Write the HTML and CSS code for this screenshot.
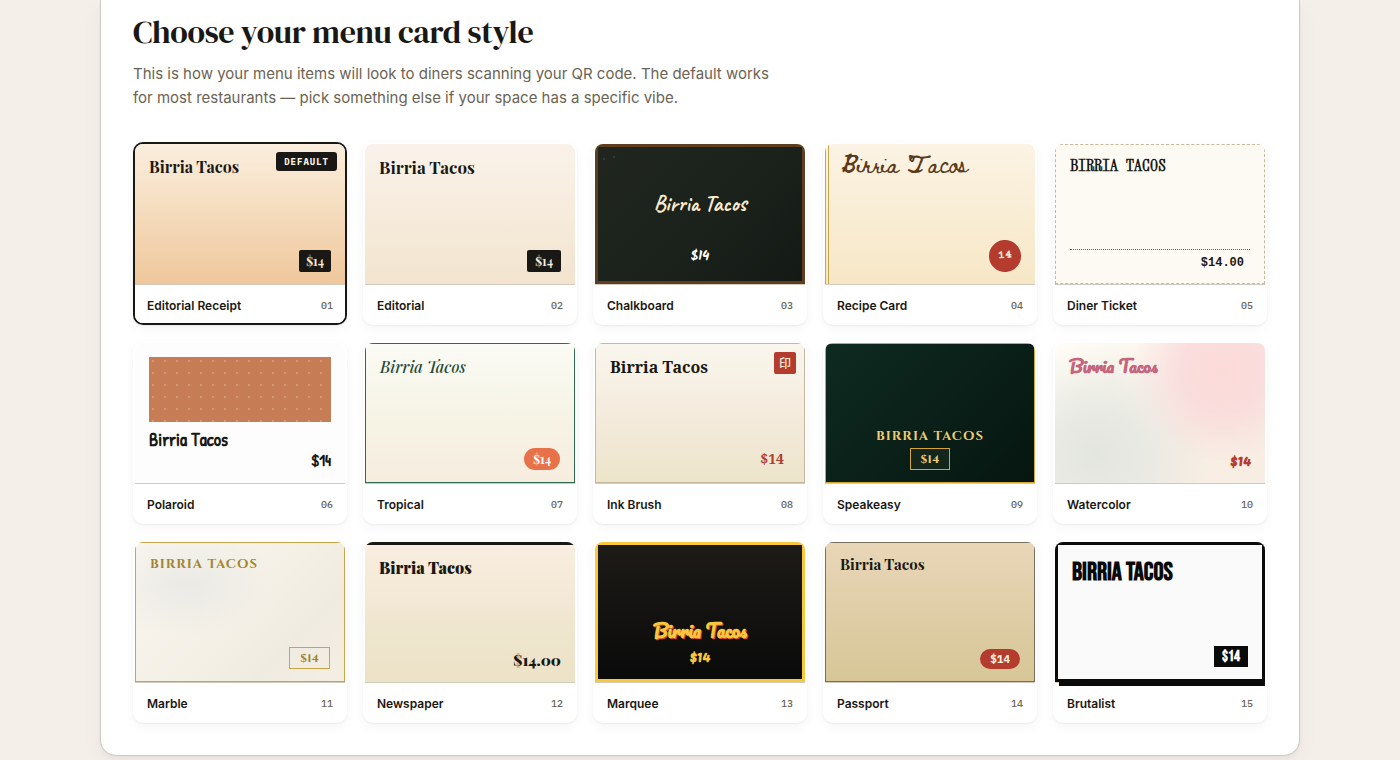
FILE: index.html
```html
<!DOCTYPE html>
<html lang="en">
<head>
<meta charset="utf-8">
<meta name="viewport" content="width=device-width, initial-scale=1">
<title>Choose your menu card style</title>
<link rel="stylesheet" href="styles.css">
</head>
<body>
<main class="panel">
  <h1 class="title">Choose your menu card style</h1>
  <p class="intro">This is how your menu items will look to diners scanning your QR code. The default works for most restaurants — pick something else if your space has a specific vibe.</p>
  <div class="grid">
    <button type="button" class="card selected" aria-pressed="true">
      <span class="preview receipt"><span class="dish">Birria Tacos</span><span class="price">$14</span><span class="badge">DEFAULT</span></span>
      <span class="foot"><span class="name">Editorial Receipt</span><span class="num">01</span></span>
    </button>
    <button type="button" class="card" aria-pressed="false">
      <span class="preview editorial"><span class="dish">Birria Tacos</span><span class="price">$14</span></span>
      <span class="foot"><span class="name">Editorial</span><span class="num">02</span></span>
    </button>
    <button type="button" class="card" aria-pressed="false">
      <span class="preview chalkboard"><span class="dish">Birria Tacos</span><span class="price">$14</span></span>
      <span class="foot"><span class="name">Chalkboard</span><span class="num">03</span></span>
    </button>
    <button type="button" class="card" aria-pressed="false">
      <span class="preview recipe"><span class="dish">Birria Tacos</span><span class="price">14</span></span>
      <span class="foot"><span class="name">Recipe Card</span><span class="num">04</span></span>
    </button>
    <button type="button" class="card" aria-pressed="false">
      <span class="preview diner"><span class="dish">BIRRIA TACOS</span><span class="price">$14.00</span></span>
      <span class="foot"><span class="name">Diner Ticket</span><span class="num">05</span></span>
    </button>
    <button type="button" class="card" aria-pressed="false">
      <span class="preview polaroid"><span class="photo"></span><span class="dish">Birria Tacos</span><span class="price">$14</span></span>
      <span class="foot"><span class="name">Polaroid</span><span class="num">06</span></span>
    </button>
    <button type="button" class="card" aria-pressed="false">
      <span class="preview tropical"><span class="dish">Birria Tacos</span><span class="price">$14</span></span>
      <span class="foot"><span class="name">Tropical</span><span class="num">07</span></span>
    </button>
    <button type="button" class="card" aria-pressed="false">
      <span class="preview ink"><span class="dish">Birria Tacos</span><span class="price">$14</span><span class="seal" lang="ja">印</span></span>
      <span class="foot"><span class="name">Ink Brush</span><span class="num">08</span></span>
    </button>
    <button type="button" class="card" aria-pressed="false">
      <span class="preview speakeasy"><span class="dish">BIRRIA TACOS</span><span class="price">$14</span></span>
      <span class="foot"><span class="name">Speakeasy</span><span class="num">09</span></span>
    </button>
    <button type="button" class="card" aria-pressed="false">
      <span class="preview watercolor"><span class="dish">Birria Tacos</span><span class="price">$14</span></span>
      <span class="foot"><span class="name">Watercolor</span><span class="num">10</span></span>
    </button>
    <button type="button" class="card" aria-pressed="false">
      <span class="preview marble"><span class="dish">BIRRIA TACOS</span><span class="price">$14</span></span>
      <span class="foot"><span class="name">Marble</span><span class="num">11</span></span>
    </button>
    <button type="button" class="card" aria-pressed="false">
      <span class="preview newspaper"><span class="dish">Birria Tacos</span><span class="price">$14.00</span></span>
      <span class="foot"><span class="name">Newspaper</span><span class="num">12</span></span>
    </button>
    <button type="button" class="card" aria-pressed="false">
      <span class="preview marquee"><span class="dish">Birria Tacos</span><span class="price">$14</span></span>
      <span class="foot"><span class="name">Marquee</span><span class="num">13</span></span>
    </button>
    <button type="button" class="card" aria-pressed="false">
      <span class="preview passport"><span class="dish">Birria Tacos</span><span class="price">$14</span></span>
      <span class="foot"><span class="name">Passport</span><span class="num">14</span></span>
    </button>
    <button type="button" class="card" aria-pressed="false">
      <span class="preview brutalist"><span class="dish">BIRRIA TACOS</span><span class="price">$14</span></span>
      <span class="foot"><span class="name">Brutalist</span><span class="num">15</span></span>
    </button>
  </div>
</main>
</body>
</html>
```
FILE: styles.css
```css
:root {
  --ink: #1a1814;
  --muted: #6b6353;
  --line: #d4cabb;
  --red: #b33c2e;
  --display: "Playfair Display", "Liberation Serif", serif;
  --mono: "IBM Plex Mono", "Liberation Mono", monospace;
}

* { box-sizing: border-box; }

body {
  margin: 0;
  min-height: 100vh;
  background: #f4efe8;
  color: var(--ink);
  font-family: Inter, "Liberation Sans", sans-serif;
}

.panel {
  max-width: 1200px;
  margin: 0 auto 4px;
  padding: 12px 32px 32px;
  background: #fff;
  border: 1px solid var(--line);
  border-top: 0;
  border-radius: 0 0 16px 16px;
  box-shadow: 0 2px 4px rgba(26, 24, 20, 0.04), 0 8px 24px rgba(26, 24, 20, 0.04);
}

.title {
  margin: 0;
  font-family: "DM Serif Display", "Liberation Serif", serif;
  font-size: 32px;
  line-height: 40px;
  font-weight: 400;
  letter-spacing: -0.01em;
}

.intro {
  max-width: 640px;
  margin: 10px 0 32px;
  font-size: 15px;
  line-height: 24px;
  color: var(--muted);
}

.grid {
  display: grid;
  grid-template-columns: repeat(5, minmax(0, 1fr));
  gap: 16px;
}

.card {
  display: flex;
  flex-direction: column;
  padding: 0;
  overflow: hidden;
  border: 2px solid transparent;
  border-radius: 10px;
  background: #fff;
  color: var(--ink);
  font: inherit;
  text-align: left;
  cursor: pointer;
  box-shadow: 0 1px 2px rgba(26, 24, 20, 0.06), 0 4px 12px rgba(26, 24, 20, 0.04);
}

.selected { border-color: var(--ink); }

.preview {
  position: relative;
  display: flex;
  flex-direction: column;
  justify-content: space-between;
  align-items: flex-start;
  height: 140px;
  padding: 12px 14px;
}

.dish {
  font-family: var(--display);
  font-size: 16px;
  line-height: 22px;
  font-weight: 700;
}

.price {
  align-self: flex-end;
  font-family: var(--display);
  font-size: 12px;
  line-height: 22px;
  font-weight: 700;
}

.foot {
  display: flex;
  justify-content: space-between;
  align-items: center;
  height: 39px;
  padding: 4px 12px 0;
  border-top: 1px solid var(--line);
  background: #fff;
}

.name {
  font-size: 12px;
  line-height: 16px;
  font-weight: 600;
}

.num {
  font-family: var(--mono);
  font-size: 10px;
  line-height: 16px;
  font-weight: 500;
  color: var(--muted);
}

.badge {
  position: absolute;
  top: 8px;
  right: 8px;
  padding: 0 8px;
  border-radius: 3px;
  background: var(--ink);
  color: #fff8ec;
  font-family: var(--mono);
  font-size: 9px;
  line-height: 19px;
  font-weight: 700;
  letter-spacing: 1px;
}

.receipt { background: linear-gradient(#fbeedd, #f6dfc3 40%, #efc79b); }
.receipt .price,
.editorial .price {
  padding: 0 7px;
  border-radius: 2px;
  background: var(--ink);
  color: #fbeedd;
}

.editorial { background: linear-gradient(#faf2ea, #f2e4ce); }
.editorial .dish { font-size: 17px; }
.editorial .price { padding: 0 8px; }

.chalkboard {
  justify-content: flex-end;
  align-items: center;
  gap: 28px;
  padding-bottom: 12px;
  border: 3px solid #5f3e20;
  background:
    radial-gradient(circle at 4px 4px, #333b33 0 1px, transparent 1px) 2px 8px / 8px 8px no-repeat,
    radial-gradient(circle at 4px 4px, #333b33 0 1px, transparent 1px) 12px 6px / 8px 8px no-repeat,
    linear-gradient(135deg, #20261f, #1a211b 60%, #131a15);
}
.chalkboard .dish {
  font-family: Caveat, Lato, sans-serif;
  font-size: 22px;
  line-height: 26px;
  color: #faebcf;
}
.chalkboard .price {
  align-self: center;
  font-family: Kalam, Caveat, Lato, sans-serif;
  font-size: 13px;
  line-height: 24px;
  color: #fff;
}

.recipe {
  padding: 8px 14px 12px 16px;
  background:
    linear-gradient(90deg, #c9a548 0 1px, transparent 1px 3px, #c9a548 3px 4px, transparent 4px),
    linear-gradient(#fcf3e4, #f6e7c6);
}
.recipe .dish {
  font-family: "Homemade Apple", "Beth Ellen", "Liberation Serif", cursive;
  font-size: 18px;
  font-weight: 400;
  color: #5a3b1c;
}
.recipe .price {
  width: 32px;
  border-radius: 50%;
  background: var(--red);
  color: #fbeedd;
  font-family: "Courier Prime", "Liberation Mono", monospace;
  line-height: 32px;
  text-align: center;
  transform: rotate(-5deg);
}

.diner {
  padding: 9px 14px 7px;
  border: 1px dashed #c8b79c;
  background: #fdfaf3;
}
.diner .dish { font-family: "Special Elite", "Xanh Mono", "Liberation Mono", monospace; }
.diner .price {
  align-self: stretch;
  padding: 0 6px;
  border-top: 1px dotted var(--red);
  font-family: "Liberation Mono", monospace;
  line-height: 26px;
  text-align: right;
}

.polaroid {
  justify-content: flex-start;
  padding: 14px 14px 0;
  background: #fdfdfd;
}
.photo {
  align-self: stretch;
  height: 65px;
  margin-bottom: 7px;
  background:
    radial-gradient(circle at 4px 4px, #d39875 0 1px, transparent 1px) 0 0 / 12px 12px,
    #c67c55;
}
.polaroid .dish,
.polaroid .price { font-family: "Patrick Hand", Lato, sans-serif; }
.polaroid .dish { font-size: 18px; }
.polaroid .price { font-size: 16px; line-height: 18px; }

.tropical {
  border: 1px solid #2e6a4d;
  background: linear-gradient(#fbfbf5, #f6f4e6 50%, #f6eddf);
}
.tropical .dish {
  font-style: italic;
  font-weight: 500;
  color: #264a39;
}
.tropical .price {
  padding: 0 9px;
  border-radius: 11px;
  background: #e7724a;
  color: #fff;
}

.ink {
  border: 1px solid #c8b79c;
  background: linear-gradient(#faf6ed, #f3eadb 55%, #ece5ca);
}
.ink .dish,
.ink .price { font-family: "Noto Serif", "Liberation Serif", serif; }
.ink .price {
  padding-right: 6px;
  color: var(--red);
  font-size: 14px;
}
.seal {
  position: absolute;
  top: 8px;
  right: 8px;
  width: 22px;
  border-radius: 2px;
  background: var(--red);
  color: #fbeedd;
  font-family: "Noto Sans CJK JP", sans-serif;
  font-size: 12px;
  line-height: 22px;
  font-weight: 500;
  text-align: center;
}

.speakeasy {
  justify-content: flex-end;
  align-items: center;
  border: 1px solid #d4a62f;
  background: linear-gradient(135deg, #0e2a20, #0a2019 50%, #061510);
}
.speakeasy .dish,
.marble .dish {
  font-family: Cinzel, "Liberation Serif", serif;
  font-size: 13px;
  line-height: 24px;
  letter-spacing: 1px;
}
.speakeasy .dish { color: #edcd72; }
.speakeasy .price,
.marble .price {
  padding: 0 10px;
  border: 1px solid #d4a62f;
  font-family: Cinzel, "Liberation Serif", serif;
  line-height: 20px;
}
.speakeasy .price {
  align-self: center;
  background: #14261b;
  color: #edcd72;
}

.watercolor {
  background:
    radial-gradient(circle at 80% 20%, #fbdbd8 0, rgba(250, 219, 219, 0.9) 20%, rgba(250, 219, 219, 0) 45%),
    radial-gradient(circle at 20% 80%, #e3e6df 0, rgba(230, 233, 226, 0.9) 22%, rgba(230, 233, 226, 0) 55%),
    linear-gradient(135deg, #fffdf7, #f7eee3 60%, #f8ede4);
}
.watercolor .dish,
.watercolor .price { font-family: Pacifico, "Liberation Serif", serif; }
.watercolor .dish { color: #c5647b; font-size: 17px; }
.watercolor .price { color: var(--red); font-size: 14px; }

.marble {
  padding: 9px 14px 12px;
  border: 1px solid #c9a548;
  background:
    radial-gradient(ellipse at 25% 30%, #eaeae5 0, rgba(236, 235, 230, 0) 40%),
    linear-gradient(135deg, #f8f6ef, #f5f0e6 50%, #f0ebe1 75%, #f4eee2);
}
.marble .dish { color: #a28430; }
.marble .price {
  border-color: #c9a548;
  color: #a28430;
}

.newspaper {
  padding: 12px 14px 11px;
  border-top: 3px solid var(--ink);
  background: linear-gradient(#f9eee0, #efe6cf 60%, #ebe2c7);
}
.newspaper .dish,
.newspaper .price { font-weight: 900; }
.newspaper .price { font-size: 15px; }

.marquee {
  justify-content: flex-end;
  align-items: center;
  border: 3px solid #f7c83d;
  background: linear-gradient(#1c1b17, #0a0a0a);
}
.marquee .dish,
.marquee .price {
  font-family: Pacifico, "Liberation Serif", serif;
  color: #f7c83d;
}
.marquee .dish {
  font-size: 18px;
  line-height: 28px;
  text-shadow: 1px 1px 0 #d9482f;
}
.marquee .price { align-self: center; font-size: 14px; }

.passport {
  padding: 10px 14px 12px;
  border: 1px solid #7c6d58;
  background: linear-gradient(#e8d6b8, #d7c696);
}
.passport .dish { font-size: 15px; }
.passport .price {
  padding: 0 10px;
  border-radius: 10px;
  background: var(--red);
  color: #fbeedd;
  font-family: var(--mono);
  font-size: 11px;
  line-height: 20px;
}

.brutalist {
  padding: 16px 14px 12px;
  border: 3px solid #0a0a0a;
  background: #fafafa;
  box-shadow: 4px 4px 0 #0a0a0a;
}
.brutalist .dish,
.brutalist .price {
  font-family: "Bebas Neue", "Liberation Sans Narrow", "Liberation Sans", sans-serif;
  color: #0a0a0a;
}
.brutalist .dish { font-size: 25px; line-height: 24px; }
.brutalist .price {
  padding: 0 8px;
  background: #0a0a0a;
  color: #fff;
  font-size: 15px;
  line-height: 21px;
}

@media (max-width: 900px) {
  .grid { grid-template-columns: repeat(auto-fill, minmax(190px, 1fr)); }
}
```
